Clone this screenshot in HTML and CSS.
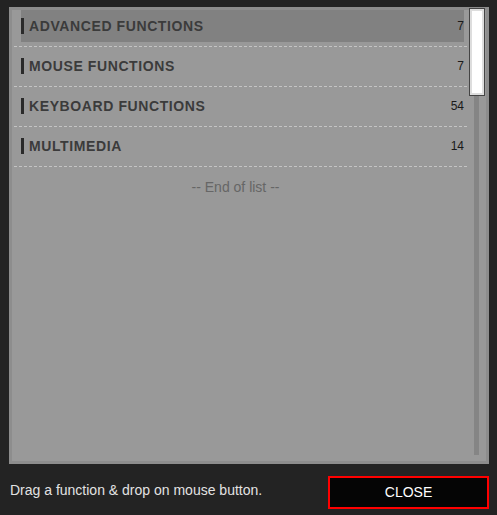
FILE: index.html
```html
<!DOCTYPE html>
<html lang="en">
<head>
    <meta charset="UTF-8">
    <meta name="viewport" content="width=device-width, initial-scale=1.0">
    <title>Functions</title>
    <link rel="stylesheet" href="styles.css">
</head>
<body>
    <div class="panel">
        <div class="list">
            <div class="item active"><span class="name">ADVANCED FUNCTIONS</span><span class="count">7</span></div>
            <div class="item"><span class="name">MOUSE FUNCTIONS</span><span class="count">7</span></div>
            <div class="item"><span class="name">KEYBOARD FUNCTIONS</span><span class="count">54</span></div>
            <div class="item"><span class="name">MULTIMEDIA</span><span class="count">14</span></div>
            <div class="end">-- End of list --</div>
        </div>
        <div class="scroll">
            <div class="thumb"></div>
            <div class="track"></div>
        </div>
    </div>
    <div class="footer">
        <div class="hint">Drag a function &amp; drop on mouse button.</div>
        <div class="closebtn">CLOSE</div>
    </div>
</body>
</html>
```

FILE: styles.css
```css
*{margin: 0; padding: 0; box-sizing: border-box;}
body{
    width: 497px;
    height: 515px;
    background-color: #232323;
    font-family: "Liberation Sans", Arial, sans-serif;
    overflow: hidden;
}
.panel{
    margin: 7px 0 0 9px;
    width: 480px;
    height: 457px;
    background-color: #999;
    border: 3px solid #8d8d8d;
    display: flex;
}
.list{
    flex: 1;
    padding-left: 2px;
}
.item{
    height: 32px;
    padding: 0 3px 0 7px;
    display: flex;
    align-items: center;
    justify-content: space-between;
    box-sizing: content-box;
    padding-bottom: 4px;
    border-bottom: 1px dashed #c4c4c4;
    margin-bottom: 3px;
    background-clip: content-box;
}
.item.active{
    background-color: #818181;
}
.name{
    font-size: 14px;
    font-weight: bold;
    letter-spacing: 0.6px;
    color: #3b3b3b;
    border-left: 3px solid #2a2a2a;
    padding-left: 5px;
    line-height: 16px;
}
.count{
    font-size: 12px;
    color: #1a1a1a;
}
.end{
    text-align: center;
    font-size: 14px;
    color: #666;
    padding-top: 9px;
    padding-right: 10px;
}
.scroll{
    width: 19px;
    display: flex;
    flex-direction: column;
    align-items: center;
    padding-left: 1px;
}
.thumb{
    width: 16px;
    height: 88px;
    margin-top: -2px;
    background-color: #fff;
    border: 1px solid #444;
    box-shadow: inset 0 0 0 2px #ddd;
}
.track{
    flex: 1;
    width: 5px;
    margin: 0 0 6px -1px;
    background-color: #858585;
}
.footer{
    display: flex;
    justify-content: space-between;
    align-items: center;
    padding: 12px 8px 0 10px;
}
.hint{
    font-size: 14px;
    color: #e2e2e2;
    margin-top: -6px;
}
.closebtn{
    width: 161px;
    height: 33px;
    line-height: 29px;
    background-color: #050505;
    border: 2px solid #f00;
    color: #fff;
    text-align: center;
    font-size: 14px;
}
```
